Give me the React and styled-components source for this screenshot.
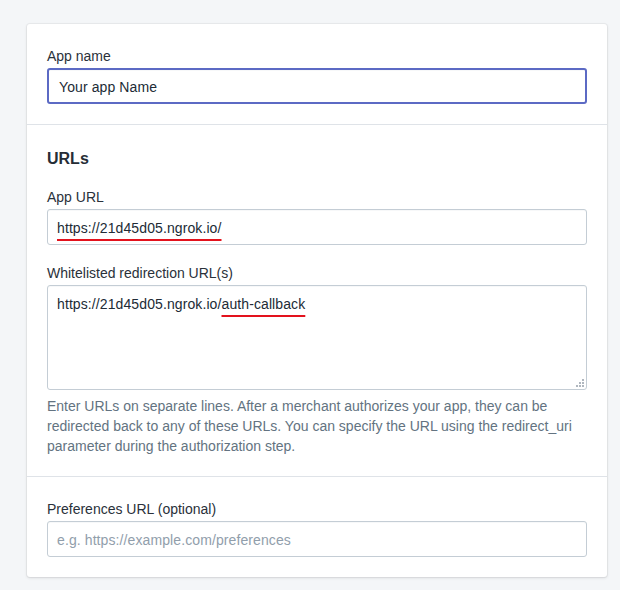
import React from 'react';
import styled, { createGlobalStyle } from 'styled-components';

const GlobalStyle = createGlobalStyle`
  html, body {
    margin: 0;
    padding: 0;
    background: #f4f6f8;
    font-family: "Liberation Sans", "Noto Sans", sans-serif;
    color: #212b36;
  }
`;

const Page = styled.div`
  padding: 24px 13px 14px 27px;
`;

const Card = styled.div`
  background: #fff;
  border-radius: 3px;
  box-shadow: 0 0 0 1px rgba(63, 63, 68, 0.05), 0 1px 3px 0 rgba(63, 63, 68, 0.15);
`;

const Section = styled.div`
  padding: 20px;
  display: flex;
  flex-direction: column;
  gap: 16px;

  & + & {
    border-top: 1px solid #dfe3e8;
  }
`;

const Heading = styled.h2`
  margin: 0;
  padding-top: 2px;
  height: 22px;
  font-size: 16px;
  line-height: 24px;
  font-weight: 600;
  color: #262d36;
`;

const Field = styled.div`
  display: flex;
  flex-direction: column;
`;

const Label = styled.label`
  font-size: 14px;
  line-height: 20px;
  padding-top: 2px;
  margin-bottom: 2px;
  color: #2a313a;
`;

const Box = styled.div`
  position: relative;
  box-sizing: border-box;
  min-height: ${(p) => (p.$multiline ? '105px' : '36px')};
  padding: ${(p) => (p.$focused ? '8px 10px 6px' : '9px 9px 7px')};
  border: ${(p) => (p.$focused ? '2px solid #5c6ac4' : '1px solid #c4cdd5')};
  border-radius: 3px;
  background: #fff;
  box-shadow: inset 0 1px 0 0 rgba(99, 115, 129, 0.05);
  font-size: 14px;
  line-height: 18px;
  letter-spacing: 0.1px;
  color: ${(p) => (p.$placeholder ? '#919eab' : '#212b36')};
`;

const Mark = styled.span`
  text-decoration: underline;
  text-decoration-color: #e3121d;
  text-decoration-thickness: 2px;
  text-underline-offset: 6px;
`;

const Grip = styled.svg`
  position: absolute;
  right: 2px;
  bottom: 2px;
`;

const Help = styled.p`
  margin: 6px 0 0;
  font-size: 14px;
  line-height: 20px;
  color: #637381;
`;

function ResizeGrip() {
  return (
    <Grip width="8" height="8" viewBox="0 0 8 8">
      <g fill="#b0b7bf">
        <rect x="6" y="0" width="2" height="2" />
        <rect x="3" y="3" width="2" height="2" />
        <rect x="6" y="3" width="2" height="2" />
        <rect x="0" y="6" width="2" height="2" />
        <rect x="3" y="6" width="2" height="2" />
        <rect x="6" y="6" width="2" height="2" />
      </g>
    </Grip>
  );
}

export default function App() {
  return (
    <>
      <GlobalStyle />
      <Page>
        <Card>
          <Section>
            <Field>
              <Label>App name</Label>
              <Box $focused>Your app Name</Box>
            </Field>
          </Section>

          <Section>
            <Heading>URLs</Heading>
            <Field>
              <Label>App URL</Label>
              <Box>
                <Mark>https://21d45d05.ngrok.io/</Mark>
              </Box>
            </Field>
            <Field>
              <Label>Whitelisted redirection URL(s)</Label>
              <Box $multiline>
                https://21d45d05.ngrok.io/<Mark>auth-callback</Mark>
                <ResizeGrip />
              </Box>
              <Help>
                Enter URLs on separate lines. After a merchant authorizes your app, they can be
                redirected back to any of these URLs. You can specify the URL using the redirect_uri
                parameter during the authorization step.
              </Help>
            </Field>
          </Section>

          <Section>
            <Field>
              <Label>Preferences URL (optional)</Label>
              <Box $placeholder>e.g. https://example.com/preferences</Box>
            </Field>
          </Section>
        </Card>
      </Page>
    </>
  );
}
